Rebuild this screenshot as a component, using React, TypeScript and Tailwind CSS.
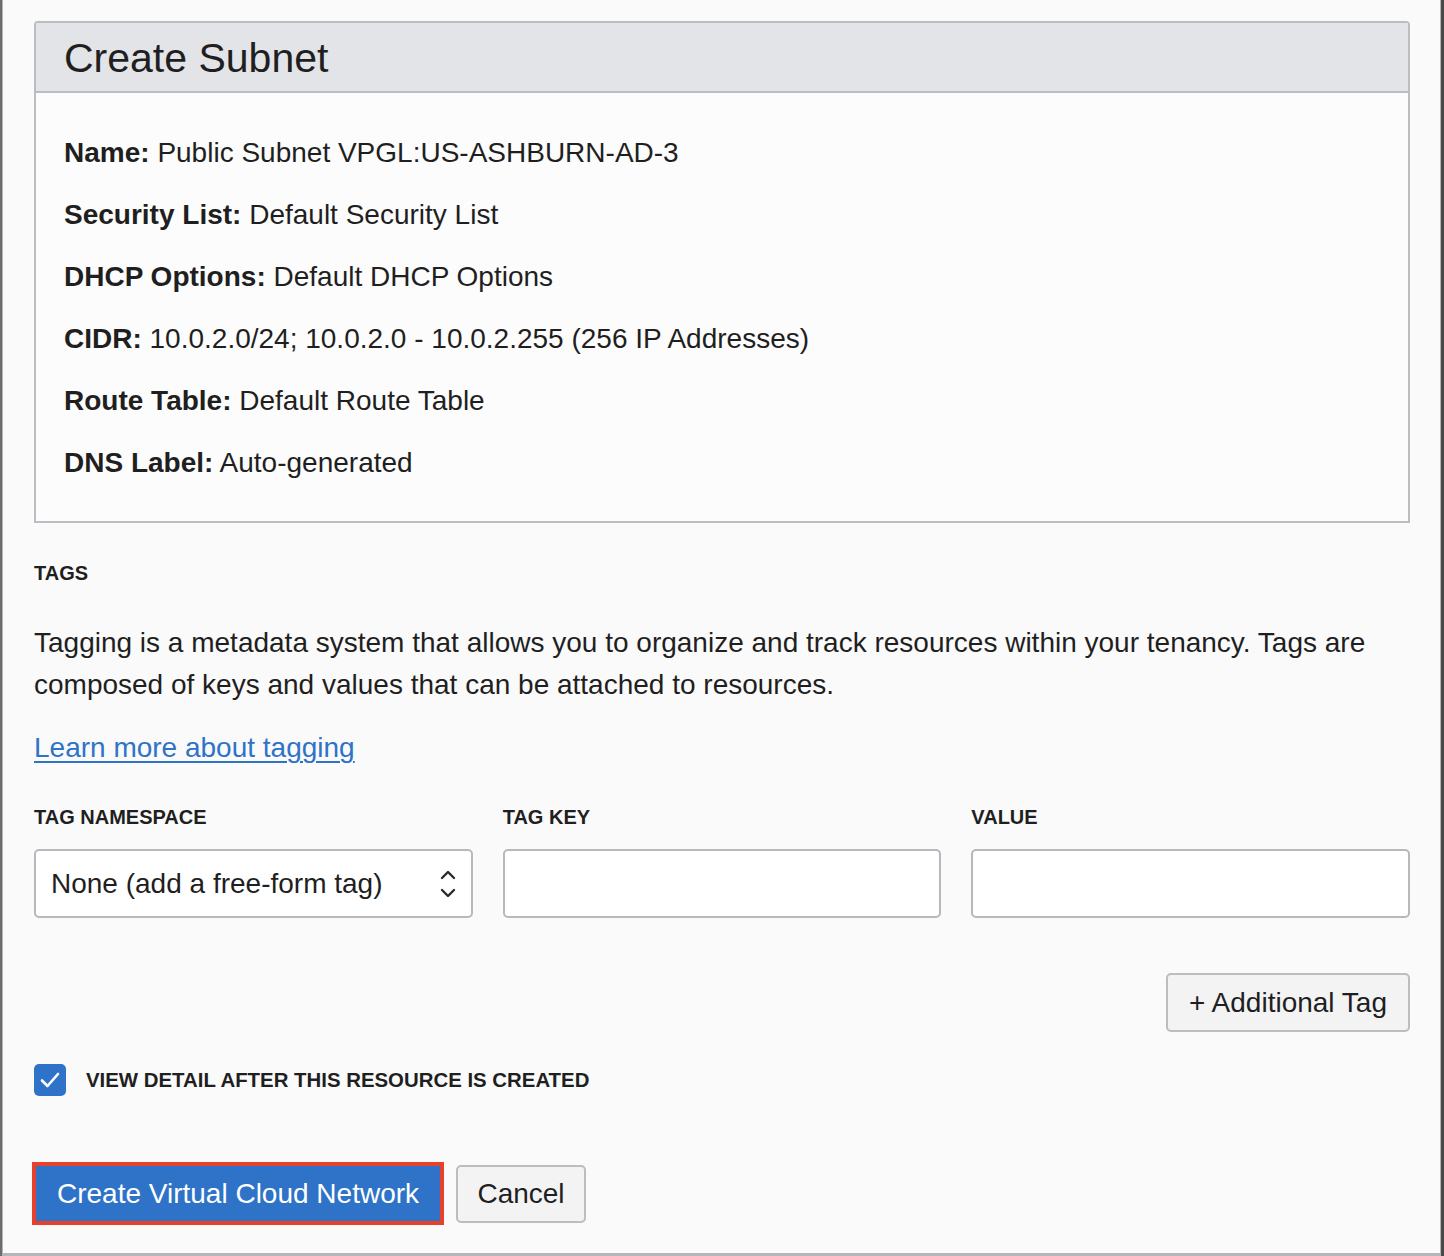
import React from 'react';

const details = [
  { label: 'Name:', value: 'Public Subnet VPGL:US-ASHBURN-AD-3' },
  { label: 'Security List:', value: 'Default Security List' },
  { label: 'DHCP Options:', value: 'Default DHCP Options' },
  { label: 'CIDR:', value: '10.0.2.0/24; 10.0.2.0 - 10.0.2.255 (256 IP Addresses)' },
  { label: 'Route Table:', value: 'Default Route Table' },
  { label: 'DNS Label:', value: 'Auto-generated' },
];

function Chevrons() {
  return (
    <svg width="18" height="32" viewBox="0 0 18 32" fill="none" stroke="#2a2a2a" strokeWidth="2.4" strokeLinecap="round" strokeLinejoin="round">
      <path d="M3 10 L9 4 L15 10" />
      <path d="M3 22 L9 28 L15 22" />
    </svg>
  );
}

export default function App() {
  return (
    <div className="flex w-[1444px] h-[1256px] bg-[#4a4a4a] font-['Liberation_Sans',Arial,sans-serif] text-[#1f1f1f]">
      <div className="w-[2px] bg-[#6c6c6c]" />

      <div className="flex-1 flex flex-col bg-[#fafafa] border-l border-r border-b-[3px] border-[#b3b6bb] pl-[31px] pr-[30px] pt-[21px]">
        {/* subnet summary */}
        <div className="border-2 border-[#babdc2] rounded-t-[4px] bg-[#fcfcfc]">
          <div className="h-[70px] flex items-center px-[28px] bg-[#e3e4e7] border-b-2 border-[#babdc2]">
            <h1 className="text-[41px] leading-none pt-[2px]">Create Subnet</h1>
          </div>
          <div className="px-[28px] pt-[29px] pb-[27px]">
            {details.map((d) => (
              <div key={d.label} className="text-[28px] leading-[62px]">
                <span className="font-bold">{d.label}</span> {d.value}
              </div>
            ))}
          </div>
        </div>

        <div className="mt-[38px] text-[20px] leading-[24px] font-bold">TAGS</div>

        <p className="mt-[37px] text-[28px] leading-[42px]">
          Tagging is a metadata system that allows you to organize and track resources within your tenancy. Tags are
          composed of keys and values that can be attached to resources.
        </p>

        <a href="#" className="mt-[21px] text-[28px] leading-[42px] text-[#2f73c9] underline underline-offset-[4px] decoration-[2px] self-start">
          Learn more about tagging
        </a>

        <div className="mt-[36px] grid grid-cols-3 gap-x-[30px]">
          <div>
            <div className="text-[20px] leading-[24px] font-bold">TAG NAMESPACE</div>
            <div className="mt-[20px] h-[69px] flex items-center justify-between pl-[15px] pr-[14px] bg-white border-2 border-[#b5b8bd] rounded-[5px] text-[28px]">
              <span>None (add a free-form tag)</span>
              <Chevrons />
            </div>
          </div>
          <div>
            <div className="text-[20px] leading-[24px] font-bold">TAG KEY</div>
            <div className="mt-[20px] h-[69px] bg-white border-2 border-[#b5b8bd] rounded-[5px]" />
          </div>
          <div>
            <div className="text-[20px] leading-[24px] font-bold">VALUE</div>
            <div className="mt-[20px] h-[69px] bg-white border-2 border-[#b5b8bd] rounded-[5px]" />
          </div>
        </div>

        <div className="mt-[55px] flex justify-end">
          <button className="h-[59px] px-[21px] bg-[#f3f3f4] border-2 border-[#babdc2] rounded-[5px] text-[28px]">
            + Additional Tag
          </button>
        </div>

        <div className="mt-[32px] flex items-center gap-[20px]">
          <div className="w-[32px] h-[32px] rounded-[5px] bg-[#2f73c9] flex items-center justify-center">
            <svg width="22" height="22" viewBox="0 0 22 22" fill="none" stroke="white" strokeWidth="2.6" strokeLinecap="round" strokeLinejoin="round">
              <path d="M3 11.5 L8.5 17 L19 5" />
            </svg>
          </div>
          <span className="text-[20.4px] font-bold">VIEW DETAIL AFTER THIS RESOURCE IS CREATED</span>
        </div>

        <div className="mt-[66px] -ml-[2px] flex items-center gap-[12px]">
          <button className="w-[412px] h-[63px] border-[4px] border-[#e5412d] bg-[#2e73c8] text-white text-[28px]">
            Create Virtual Cloud Network
          </button>
          <button className="w-[130px] h-[58px] bg-[#f3f3f4] border-2 border-[#babdc2] rounded-[5px] text-[28px]">
            Cancel
          </button>
        </div>
      </div>

      <div className="w-[3px] bg-[#4a4a4a]" />
    </div>
  );
}
